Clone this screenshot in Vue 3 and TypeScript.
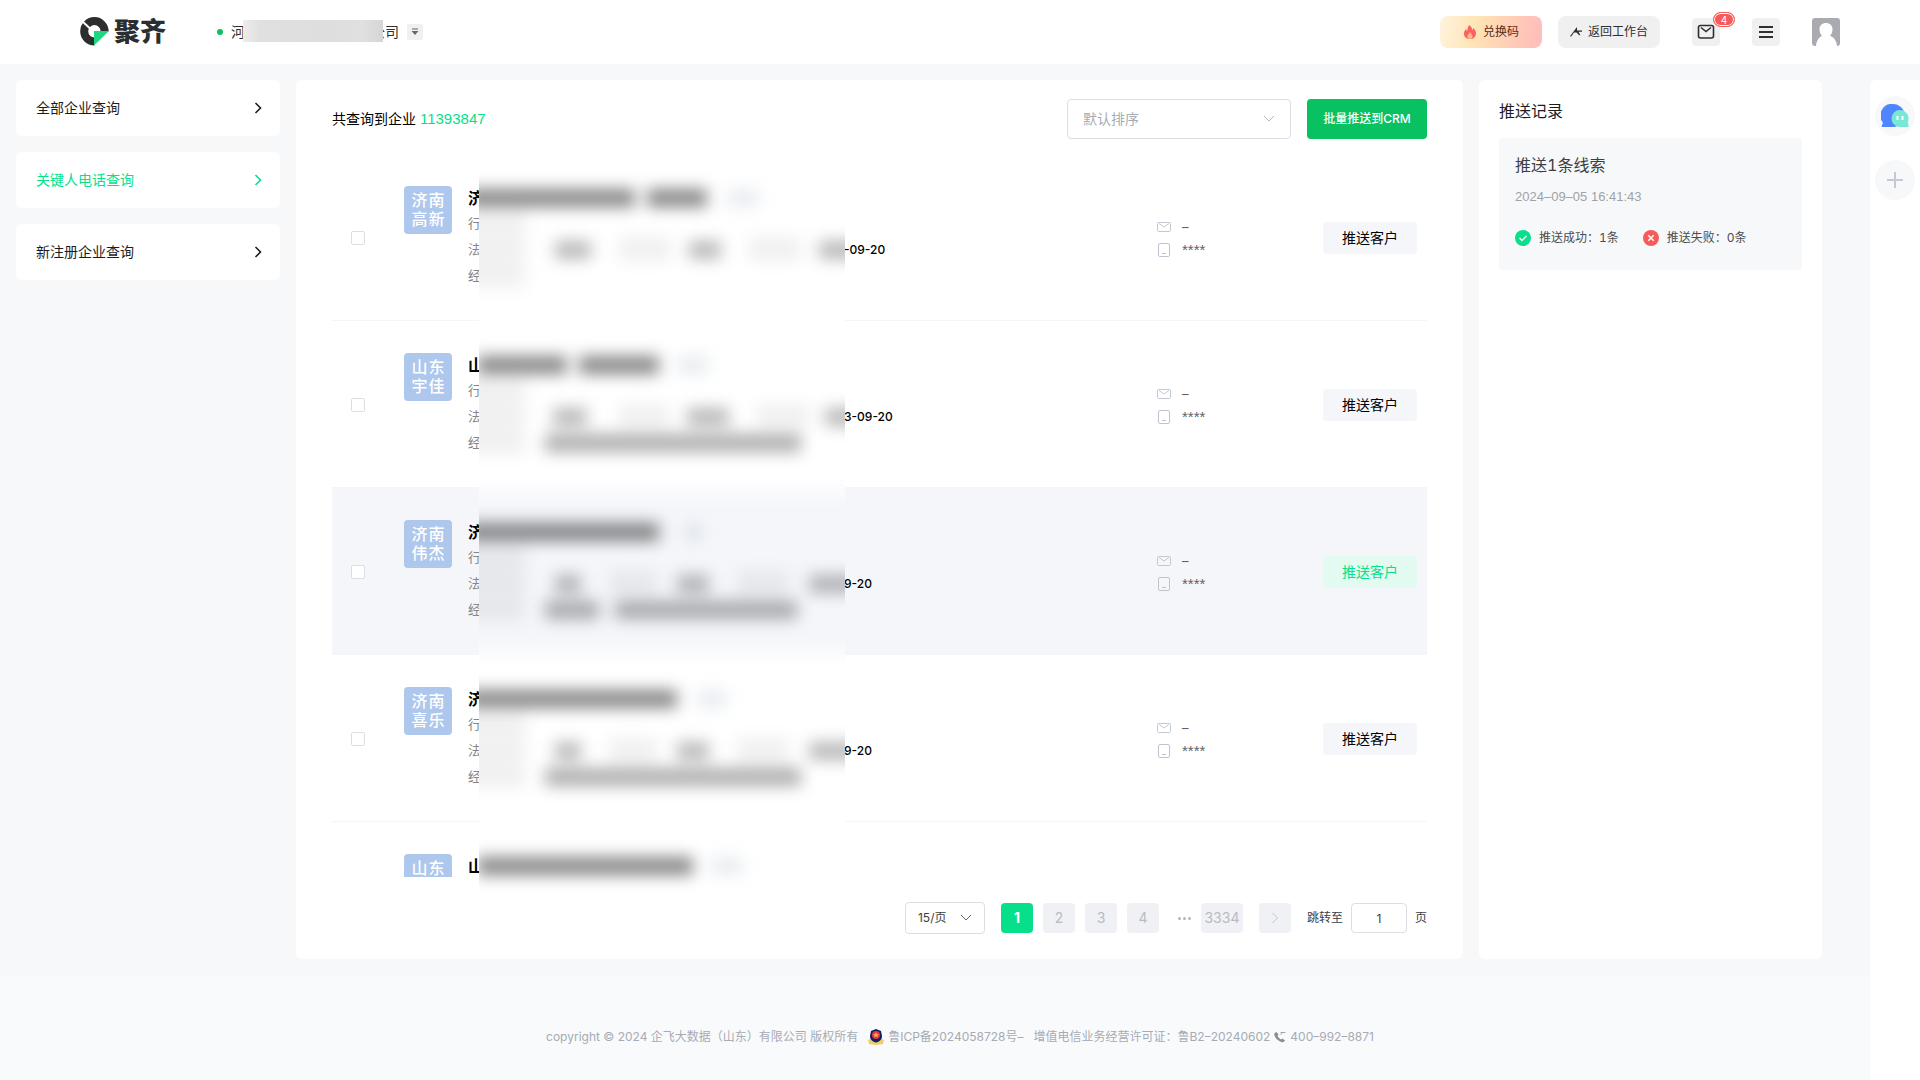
<script setup lang="ts">
import { ref } from 'vue'

type Tone = 'title' | 'tag' | 'label' | 'value' | 'scope'
interface Bar { x: number; w: number; tone: Tone }
interface Company {
  badge: string[]
  initial: string
  date?: string
  active?: boolean
  masks: Bar[][]
}

const bar = (x: number, w: number, tone: Tone): Bar => ({ x, w, tone })

const menu = [
  { label: '全部企业查询', active: false },
  { label: '关键人电话查询', active: true },
  { label: '新注册企业查询', active: false },
]

const label = bar(-14, 60, 'label')

const companies: Company[] = [
  {
    badge: ['济南', '高新'], initial: '济', date: '-09-20',
    masks: [
      [bar(-12, 168, 'title'), bar(168, 60, 'title'), bar(248, 32, 'tag')],
      [label],
      [label, bar(76, 36, 'value'), bar(140, 52, 'label'), bar(210, 32, 'value'), bar(270, 52, 'label'), bar(340, 40, 'value')],
      [label],
    ],
  },
  {
    badge: ['山东', '宇佳'], initial: '山', date: '3-09-20',
    masks: [
      [bar(-2, 90, 'title'), bar(100, 80, 'title'), bar(198, 32, 'tag')],
      [label],
      [label, bar(74, 34, 'value'), bar(140, 50, 'label'), bar(208, 42, 'value'), bar(278, 52, 'label'), bar(346, 40, 'value')],
      [label, bar(66, 256, 'scope')],
    ],
  },
  {
    badge: ['济南', '伟杰'], initial: '济', date: '9-20', active: true,
    masks: [
      [bar(-12, 192, 'title'), bar(206, 18, 'tag')],
      [label],
      [label, bar(76, 26, 'value'), bar(130, 48, 'label'), bar(198, 32, 'value'), bar(258, 52, 'label'), bar(330, 50, 'value')],
      [label, bar(66, 54, 'scope'), bar(136, 182, 'scope')],
    ],
  },
  {
    badge: ['济南', '喜乐'], initial: '济', date: '9-20',
    masks: [
      [bar(-12, 210, 'title'), bar(218, 30, 'tag')],
      [label],
      [label, bar(76, 26, 'value'), bar(130, 48, 'label'), bar(198, 32, 'value'), bar(258, 52, 'label'), bar(330, 50, 'value')],
      [label, bar(66, 256, 'scope')],
    ],
  },
  {
    badge: ['山东'], initial: '山',
    masks: [[bar(-2, 216, 'title'), bar(232, 32, 'tag')]],
  },
]

const pages = [1, 2, 3, 4]
const current = ref(1)
const jump = ref('1')
</script>

<template>
  <div class="page">
    <header class="top">
      <a class="logo" href="#" aria-label="聚齐">
        <svg width="30" height="30" viewBox="0 0 30 30">
          <path d="M14.500 24.500A10.200 10.200 0 1 1 24.600 14.500" fill="none" stroke="#2b2d2e" stroke-width="8" />
          <path d="M2 4l8 7.500" stroke="#fff" stroke-width="2" />
          <path d="M14 14H29L14 28.500z" fill="#1fd782" />
        </svg>
        <span>聚齐</span>
      </a>
      <div class="org">
        <i class="dot"></i>
        <span class="org-name"><span>河</span><span>公司</span><i class="org-mask"></i></span>
        <button class="org-toggle" aria-label="切换企业">
          <svg width="8" height="8" viewBox="0 0 8 8"><path d="M1 1h6" stroke="#666" /><path d="M.5 3h7L4 7z" fill="#666" /></svg>
        </button>
      </div>
      <div class="actions">
        <button class="pill redeem">
          <svg width="14" height="14" viewBox="0 0 14 14">
            <path d="M6.300 0c1.900 1.500 2.900 3 2.800 5 .7-.4 1.100-1 1.200-1.900C12 4.800 13 6.600 13 8.600c0 2.500-1.500 4.400-3.600 5.200H4.600C2.500 13 1 11.100 1 8.700c0-2 .9-3.400 2-4.700.2 1 .6 1.600 1.300 2C4.300 3.600 5 1.600 6.300 0z" fill="#fb6260" />
            <path d="M7 7c.4 1.300 2.600 2.600 2.600 4.500 0 1.300-1 2.300-2.600 2.300s-2.600-1-2.600-2.300C4.400 9.600 6.600 8.300 7 7z" fill="#ffb98a" />
          </svg>
          兑换码
        </button>
        <button class="pill back">
          <svg width="12" height="12" viewBox="0 0 12 12"><path d="M7 1v3.400h5v1.400H8.500L10.500 9.500 9 9 6.500 6.500H4L1.200 10.500 0 10.300z" fill="#2d2d2d" /></svg>
          返回工作台
        </button>
        <button class="square mail" aria-label="消息">
          <svg width="18" height="16" viewBox="0 0 18 16"><rect x="1.500" y="1.500" width="15" height="12.500" rx="2" fill="none" stroke="#2d2f33" stroke-width="1.600" /><path d="M4 3.500l5 4 5-4" fill="none" stroke="#2d2f33" stroke-width="1.600" /></svg>
          <span class="count">4</span>
        </button>
        <button class="square" aria-label="菜单">
          <svg width="14" height="12" viewBox="0 0 14 12"><path d="M0 1h14M0 6h14M0 11h14" stroke="#2d2f33" stroke-width="2" /></svg>
        </button>
        <button class="avatar" aria-label="个人中心">
          <svg width="28" height="28" viewBox="0 0 28 28"><rect width="28" height="28" rx="3" fill="#a9abb0" /><path d="M14 5c4 0 6.500 2.600 6.500 6.500 0 2.600-1 4.800-2.500 6.200 4 1.500 6.700 5.300 7 10.300H4c.3-5 3-8.800 6-10.300-1.500-1.400-2.500-3.600-2.500-6.200C7.500 7.600 10 5 14 5z" fill="#fff" /></svg>
        </button>
      </div>
    </header>

    <div class="body">
      <nav class="side">
        <a v-for="m in menu" :key="m.label" href="#" :class="{ on: m.active }">
          {{ m.label }}
          <svg width="8" height="12" viewBox="0 0 8 12"><path d="M1.500 1l5 5-5 5" fill="none" stroke="currentColor" stroke-width="1.600" /></svg>
        </a>
      </nav>

      <main class="results">
        <div class="toolbar">
          <p>共查询到企业 <span class="total">11393847</span></p>
          <label class="sort">
            <select aria-label="排序"><option>默认排序</option></select>
            <svg width="12" height="8" viewBox="0 0 12 8"><path d="M1 1l5 5 5-5" fill="none" stroke="#b4b7bf" /></svg>
          </label>
          <button class="batch">批量推送到CRM</button>
        </div>

        <div class="list-wrap">
          <div class="list">
            <article v-for="(c, i) in companies" :key="i" class="row" :class="{ active: c.active }">
              <input type="checkbox" :aria-label="'选择企业 ' + (i + 1)" />
              <div class="badge"><span v-for="b in c.badge" :key="b">{{ b }}</span></div>
              <div class="info">
                <h3>{{ c.initial }}</h3>
                <template v-if="c.date">
                  <p>行</p>
                  <p><span class="lead">法</span><b>{{ c.date }}</b></p>
                  <p>经</p>
                </template>
              </div>
              <template v-if="c.date">
                <div class="contact">
                  <div>
                    <svg width="14" height="14" viewBox="0 0 14 14"><rect x=".5" y="2.500" width="13" height="9" rx="1" fill="none" stroke="#c5c7d3" /><path d="M2 3.500l5 3.500 5-3.500" fill="none" stroke="#c5c7d3" /></svg>
                    <span>–</span>
                  </div>
                  <div>
                    <svg width="14" height="14" viewBox="0 0 14 14"><rect x="1.500" y=".5" width="11" height="13" rx="1.500" fill="none" stroke="#c0c2cf" /><path d="M5 10.500h4" stroke="#c0c2cf" /></svg>
                    <span class="hidden-phone">****</span>
                  </div>
                </div>
                <button class="push">推送客户</button>
              </template>
            </article>
          </div>
          <div class="veil" aria-hidden="true">
            <div v-for="(c, i) in companies" :key="i" class="veil-row" :class="{ active: c.active }">
              <div v-for="(line, j) in c.masks" :key="j" class="veil-line">
                <i v-for="(b, k) in line" :key="k" :class="b.tone" :style="{ left: b.x + 'px', width: b.w + 'px' }"></i>
              </div>
            </div>
          </div>
        </div>

        <div class="pager">
          <label class="size">
            <select aria-label="每页条数"><option>15/页</option></select>
            <svg width="12" height="8" viewBox="0 0 12 8"><path d="M1 1l5 5 5-5" fill="none" stroke="#606266" /></svg>
          </label>
          <div class="nums">
            <button v-for="p in pages" :key="p" :class="{ on: p === current }" @click="current = p">{{ p }}</button>
            <span class="dots"><i></i><i></i><i></i></span>
            <button class="last">3334</button>
          </div>
          <button class="next" aria-label="下一页">
            <svg width="8" height="12" viewBox="0 0 8 12"><path d="M1.500 1l5 5-5 5" fill="none" stroke="#bfc2cb" /></svg>
          </button>
          <label class="jump">跳转至<input v-model="jump" type="text" />页</label>
        </div>
      </main>

      <aside class="log">
        <h2>推送记录</h2>
        <section class="log-card">
          <h3>推送1条线索</h3>
          <time>2024–09–05 16:41:43</time>
          <div class="stats">
            <span>
              <svg width="16" height="16" viewBox="0 0 16 16"><circle cx="8" cy="8" r="8" fill="#07df8b" /><path d="M4.500 8l2.500 2.500 4.500-4.500" fill="none" stroke="#fff" stroke-width="1.500" /></svg>
              推送成功：1条
            </span>
            <span>
              <svg width="16" height="16" viewBox="0 0 16 16"><circle cx="8" cy="8" r="8" fill="#f65b5b" /><path d="M5.300 5.300l5.400 5.400M10.700 5.300l-5.400 5.400" stroke="#fff" stroke-width="1.500" /></svg>
              推送失败：0条
            </span>
          </div>
        </section>
      </aside>
    </div>

    <div class="dock">
      <button aria-label="客服">
        <svg width="28" height="24" viewBox="0 0 28 24">
          <path d="M12 0a11.500 11.500 0 0 1 11.500 11.500c0 6-5 11.500-11.500 11.500H2c-1.500 0-1.500-1-1-2 .5-.8 1-1.500.8-2.500A11.500 11.500 0 0 1 12 0z" fill="#4f86ff" />
          <path d="M19 6a8.500 8.500 0 0 1 8 11.500c-.3 1-.2 1.800.3 2.800.8 1.500.5 2.700-1 2.700H19A8.500 8.500 0 0 1 19 6z" fill="#79e7d5" />
          <path d="M16.500 12v4M21.500 12v4" stroke="#fff" stroke-width="2" />
        </svg>
      </button>
      <button aria-label="添加">
        <svg width="16" height="16" viewBox="0 0 16 16"><path d="M8 0v16M0 8h16" stroke="#c6c8d4" stroke-width="2" /></svg>
      </button>
    </div>

    <footer class="foot">
      <span>copyright © 2024 企飞大数据（山东）有限公司 版权所有</span>
      <a class="icp" href="#">
        <svg width="16" height="16" viewBox="0 0 16 16">
          <path d="M0 11l2-1 6 3 6-3 2 1-1 4-7 1-7-1z" fill="#f0cf6a" />
          <path d="M8 0l5 2 1 5c0 4-3 6-6 6.500C5 13 2 11 2 7l1-5z" fill="#13205e" />
          <circle cx="8" cy="6" r="4" fill="#e8323a" />
          <path d="M8 3l1 2h2L9.500 6.500 10 8.500 8 7.500l-2 1 .5-2L5 5h2z" fill="#f9a05c" />
        </svg>
        鲁ICP备2024058728号–
      </a>
      <span class="licence">增值电信业务经营许可证：鲁B2–20240602</span>
      <span class="phone">
        <svg width="12" height="12" viewBox="0 0 12 12"><path d="M2.500 1l2 2.500L3.500 5c.8 1.500 2 2.700 3.500 3.500L8.500 7.500 11 9.500C10 11 9 11.500 7.500 11 4 10 1 7 .3 3.800.2 2.500 1 1.500 2.500 1z" fill="#8d8d8f" /><path d="M6.500 1.500h5M6.500 3.500l2-1.500" stroke="#a5a5a8" fill="none" /></svg>
        400–992–8871
      </span>
    </footer>
  </div>
</template>

<style>
body { background: #f7f8fa; }
</style>

<style scoped>
* { box-sizing: border-box; margin: 0; padding: 0; }
.page {
  display: flex; flex-direction: column; height: 100vh; min-height: 720px;
  background: #f7f8fa; color: #1c1c1e;
  font-family: Inter, "Noto Sans CJK SC", sans-serif; font-size: 14px; line-height: 20px;
}
button, input, select { font: inherit; color: inherit; border: 0; background: none; }
button { cursor: pointer; display: flex; align-items: center; justify-content: center; }
a { color: inherit; text-decoration: none; }
svg { flex: none; display: block; }
i { display: block; }

.top { display: flex; align-items: center; height: 64px; padding: 0 80px; background: #fff; }
.logo { display: flex; align-items: center; gap: 4px; font-size: 26px; font-weight: 900; line-height: 28px; color: #2b2d2e; }
.org { display: flex; align-items: center; margin-left: 51px; }
.dot { width: 6px; height: 6px; border-radius: 50%; background: #08c160; }
.org-name { position: relative; display: flex; justify-content: space-between; width: 168px; margin: 0 8px; color: #2d2f33; }
.org-mask { position: absolute; left: 12px; top: -2px; width: 140px; height: 22px; background: linear-gradient(90deg, #ececec, #e0e0e0 12%, #dedede 60%, #e0e0e0 85%, #d6d6d6); }
.org-toggle { width: 16px; height: 16px; border-radius: 2px; background: #f0f0f0; }
.actions { display: flex; align-items: center; margin-left: auto; }
.pill { gap: 6px; width: 102px; height: 32px; border-radius: 8px; font-size: 12px; }
.redeem { background: linear-gradient(100deg, #fff3df, #ffe5b5 35%, #ffc9b6 75%, #ffbdbd); color: #5c2a1c; margin-right: 16px; }
.back { background: #f0f0f0; color: #2d2f33; margin-right: 32px; }
.square { position: relative; width: 28px; height: 28px; border-radius: 4px; background: #f0f0f0; margin-right: 32px; }
.count {
  position: absolute; left: 21px; top: -6px; width: 22px; height: 15px; border-radius: 8px;
  background: #f65b5b; border: 1px solid #f65b5b; box-shadow: inset 0 0 0 1px #fff;
  color: #fff; font-size: 10px; line-height: 14px; text-align: center;
}

.body { flex: 1; min-height: 0; display: flex; gap: 16px; padding: 16px 98px 16px 16px; }
.side { flex: none; width: 264px; display: flex; flex-direction: column; gap: 16px; }
.side a { display: flex; align-items: center; justify-content: space-between; height: 56px; padding: 0 18px 0 20px; border-radius: 6px; background: #fff; }
.side .on { color: #07df8b; }

.results { flex: 1; min-width: 0; display: flex; flex-direction: column; padding: 19px 36px 25px; border-radius: 6px; background: #fff; }
.toolbar { display: flex; align-items: center; gap: 16px; margin-bottom: 15px; color: #000; }
.toolbar p { flex: 1; }
.total { color: #07df8b; font-family: "Liberation Sans", sans-serif; font-size: 15px; }
.sort, .size { position: relative; display: block; }
.sort select, .size select { appearance: none; width: 100%; height: 100%; border: 1px solid #dcdee6; border-radius: 4px; background: #fff; }
.sort { width: 224px; height: 40px; }
.sort select { padding: 0 15px; color: #a8abb2; }
.sort svg { position: absolute; right: 16px; top: 16px; pointer-events: none; }
.batch { width: 120px; height: 40px; border-radius: 4px; background: #08c160; color: #fff; font-size: 12px; font-weight: 500; }

.list-wrap { position: relative; flex: 1; min-height: 0; }
.list { height: 100%; overflow: hidden; }
.row { display: flex; align-items: flex-start; height: 167px; padding: 32px 10px 0 19px; border-bottom: 1px solid #f5f6fa; }
.row.active { background: #f5f6fa; }
.row input { appearance: none; flex: none; width: 14px; height: 14px; margin: 45px 39px 0 0; border: 1px solid #dcdee6; border-radius: 2px; background: #fff; }
.badge {
  flex: none; display: flex; flex-direction: column; align-items: center;
  width: 48px; height: 48px; margin-right: 16px; padding-top: 5px; border-radius: 4px;
  background: #aec7ed; color: #fff; font-size: 16px; font-weight: 500; line-height: 19px; letter-spacing: 1px; text-indent: 1px;
}
.info { flex: 1; min-width: 0; font-size: 13px; line-height: 26px; color: #85878c; }
.info h3 { font-size: 16px; line-height: 24px; font-weight: 700; color: #000; }
.info p { display: flex; height: 26px; }
.lead { width: 376px; }
.info b { padding-top: 1px; font-size: 12px; font-weight: 500; color: #000; }
.contact { flex: none; width: 166px; margin-top: 29px; font-size: 13px; color: #606266; }
.contact div { display: flex; align-items: center; gap: 11px; height: 23px; }
.hidden-phone { font-family: "Liberation Sans", sans-serif; font-size: 15px; }
.push { flex: none; width: 94px; height: 32px; margin-top: 36px; border-radius: 4px; background: #f5f6fa; color: #000; }
.active .push { background: #e2faf0; color: #07df8b; }

.veil { position: absolute; left: 147px; top: 0; bottom: -16px; width: 366px; overflow: hidden; background: #fff; }
.veil-row { height: 167px; padding-top: 31px; }
.veil-row.active { height: 191px; margin: -12px 0; padding-top: 43px; background: linear-gradient(#fff, #f5f6fa 32px, #f5f6fa 160px, #fff); }
.veil-line { position: relative; height: 26px; }
.veil-line i { position: absolute; top: 4px; height: 18px; filter: blur(8px); }
.title { background: rgba(0, 0, 0, .48); }
.tag { background: rgba(120, 140, 170, .16); }
.veil-line .label { top: 0; height: 24px; background: rgba(0, 0, 0, .06); }
.value { background: rgba(0, 0, 0, .28); }
.scope { background: rgba(0, 0, 0, .32); }

.pager { display: flex; align-items: center; justify-content: flex-end; gap: 16px; margin-top: 25px; font-size: 12px; color: #3c3e42; }
.size { width: 80px; height: 32px; }
.size select { padding: 0 12px; }
.size svg { position: absolute; right: 13px; top: 12px; pointer-events: none; }
.nums { display: flex; align-items: center; gap: 10px; }
.nums button, .next { width: 32px; height: 30px; border-radius: 4px; background: #f0f1f5; color: #b9bbc2; font-size: 14px; }
.nums .on { background: #07df8b; color: #fff; font-weight: 700; }
.nums .last { width: 42px; }
.dots { display: flex; justify-content: flex-end; gap: 2px; width: 22px; }
.dots i { width: 3px; height: 3px; border-radius: 50%; background: #b4b6bd; }
.jump { display: flex; align-items: center; gap: 8px; }
.jump input { width: 56px; height: 30px; border: 1px solid #dcdee6; border-radius: 4px; text-align: center; font-size: 12px; }

.log { flex: none; width: 343px; padding: 19px 20px; border-radius: 6px; background: #fff; }
.log h2 { font-size: 16px; font-weight: 400; line-height: 24px; }
.log-card { margin-top: 15px; height: 132px; padding: 15px 16px; border-radius: 4px; background: #f7f8fa; font-variant-numeric: tabular-nums; }
.log-card h3 { font-size: 16px; font-weight: 400; line-height: 24px; color: #3c3e42; }
.log-card time { display: block; margin-top: 10px; font-family: "Liberation Sans", sans-serif; font-size: 13px; color: #a0a2a6; }
.stats { display: flex; gap: 24px; margin-top: 21px; font-size: 12px; color: #4a4c50; }
.stats span { display: flex; align-items: center; gap: 8px; }

.dock { position: fixed; right: 0; top: 80px; bottom: 0; width: 50px; display: flex; flex-direction: column; align-items: center; gap: 24px; padding-top: 16px; border-radius: 6px 0 0 0; background: #fff; }
.dock button { width: 40px; height: 40px; border-radius: 50%; background: #f7f8fa; }

.foot { flex: none; display: flex; align-items: center; justify-content: center; height: 105px; padding-top: 19px; background: #f9fafc; color: #a6abb4; font-size: 12px; }
.icp, .phone { display: flex; align-items: center; gap: 4px; }
.icp { margin: 0 10px; }
.phone { margin-left: 4px; }
</style>
